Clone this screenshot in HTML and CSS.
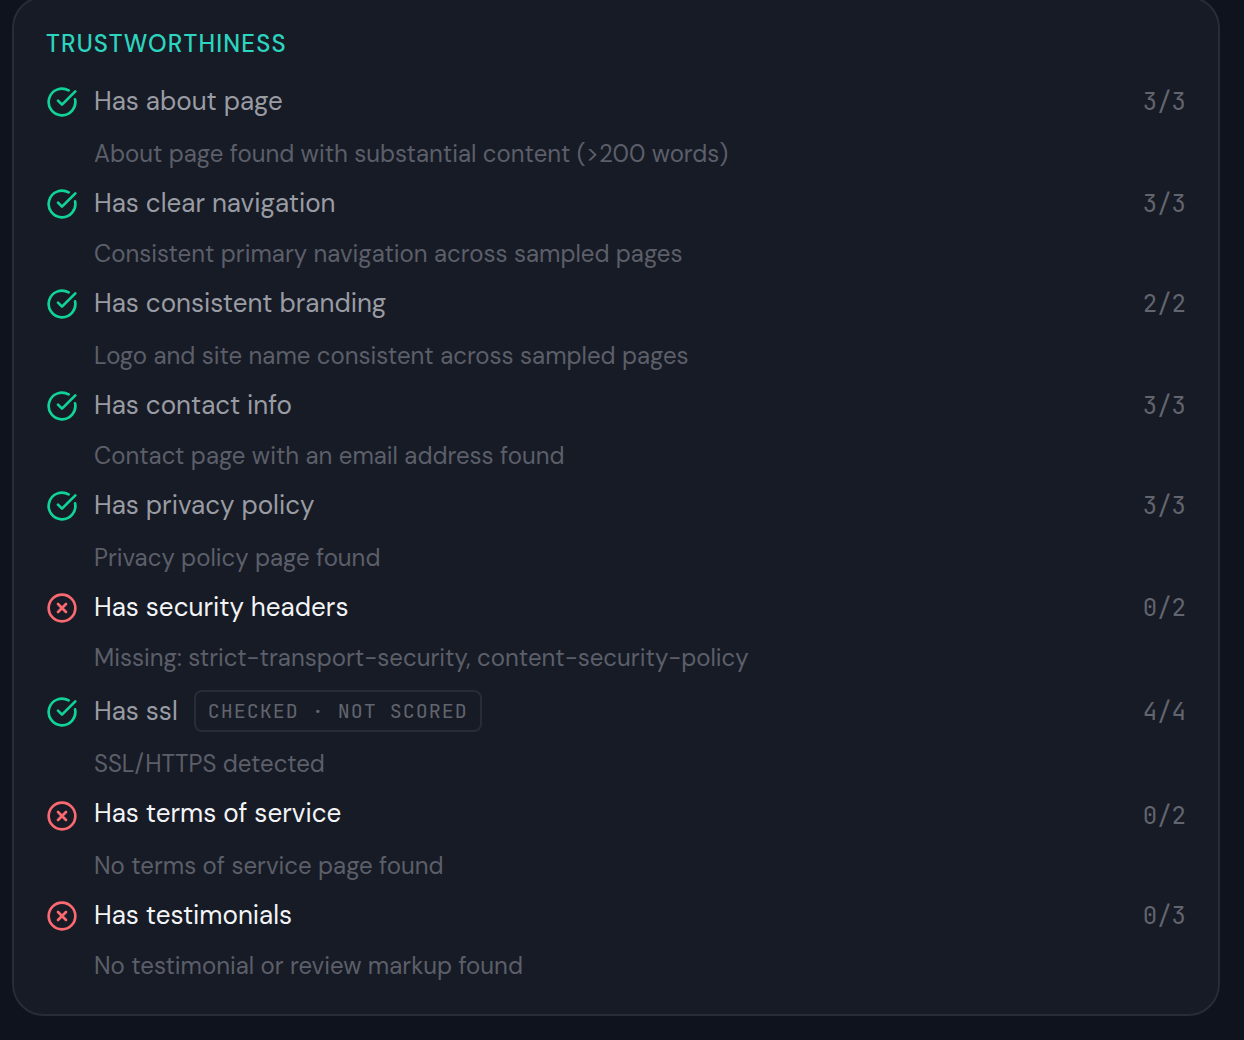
FILE: index.html
```html
<!DOCTYPE html>
<html lang="en">
<head>
  <meta charset="UTF-8" />
  <meta name="viewport" content="width=device-width, initial-scale=1.0" />
  <title>Trustworthiness</title>
  <link rel="stylesheet" href="styles.css">
</head>
<body>
  <svg class="sprite" aria-hidden="true">
    <symbol id="pass" viewBox="0 0 24 24">
      <path d="M21.801 10A10 10 0 1 1 17 3.335" />
      <path d="m9 11 3 3L22 4" />
    </symbol>
    <symbol id="fail" viewBox="0 0 24 24">
      <circle cx="12" cy="12" r="10" />
      <path d="m15 9-6 6M9 9l6 6" />
    </symbol>
  </svg>

  <section class="card">
    <h2 class="card-title">TRUSTWORTHINESS</h2>
    <ul class="checks">
      <li class="check">
        <div class="check-head">
          <svg class="icon"><use href="#pass" /></svg>
          <span class="name">Has about page</span>
          <span class="score">3/3</span>
        </div>
        <p class="detail">About page found with substantial content (&gt;200 words)</p>
      </li>
      <li class="check snug">
        <div class="check-head">
          <svg class="icon"><use href="#pass" /></svg>
          <span class="name">Has clear navigation</span>
          <span class="score">3/3</span>
        </div>
        <p class="detail">Consistent primary navigation across sampled pages</p>
      </li>
      <li class="check">
        <div class="check-head">
          <svg class="icon"><use href="#pass" /></svg>
          <span class="name">Has consistent branding</span>
          <span class="score">2/2</span>
        </div>
        <p class="detail">Logo and site name consistent across sampled pages</p>
      </li>
      <li class="check snug">
        <div class="check-head">
          <svg class="icon"><use href="#pass" /></svg>
          <span class="name">Has contact info</span>
          <span class="score">3/3</span>
        </div>
        <p class="detail">Contact page with an email address found</p>
      </li>
      <li class="check">
        <div class="check-head">
          <svg class="icon"><use href="#pass" /></svg>
          <span class="name">Has privacy policy</span>
          <span class="score">3/3</span>
        </div>
        <p class="detail">Privacy policy page found</p>
      </li>
      <li class="check snug failed before-badge">
        <div class="check-head">
          <svg class="icon"><use href="#fail" /></svg>
          <span class="name">Has security headers</span>
          <span class="score">0/2</span>
        </div>
        <p class="detail">Missing: strict-transport-security, content-security-policy</p>
      </li>
      <li class="check with-badge">
        <div class="check-head">
          <svg class="icon"><use href="#pass" /></svg>
          <span class="name">Has ssl</span>
          <span class="badge">CHECKED · NOT SCORED</span>
          <span class="score">4/4</span>
        </div>
        <p class="detail">SSL/HTTPS detected</p>
      </li>
      <li class="check snug failed raised">
        <div class="check-head">
          <svg class="icon"><use href="#fail" /></svg>
          <span class="name">Has terms of service</span>
          <span class="score">0/2</span>
        </div>
        <p class="detail">No terms of service page found</p>
      </li>
      <li class="check snug failed">
        <div class="check-head">
          <svg class="icon"><use href="#fail" /></svg>
          <span class="name">Has testimonials</span>
          <span class="score">0/3</span>
        </div>
        <p class="detail">No testimonial or review markup found</p>
      </li>
    </ul>
  </section>
</body>
</html>
```
FILE: styles.css
```css
* {
  box-sizing: border-box;
}

body {
  margin: 0;
  height: 1040px;
  overflow: hidden;
  background: #0f131e;
  font-family: "DM Sans", Inter, sans-serif;
  color: #f3f4f6;
}

.sprite {
  display: none;
}

.card {
  width: 1208px;
  height: 1020px;
  margin: -4px 0 0 12px;
  padding: 28px 32px 0;
  background: #171b26;
  border: 2px solid #292c36;
  border-radius: 32px;
}

.card-title {
  margin: 0 0 21px;
  font-size: 24px;
  line-height: 36px;
  font-weight: 500;
  letter-spacing: 1.2px;
  color: #2dd4bf;
}

.checks {
  margin: 0;
  padding: 0;
  list-style: none;
}

.check {
  height: 102px;
}

.check.snug {
  height: 100px;
}

.check.before-badge {
  height: 101px;
}

.check.with-badge {
  height: 107px;
}

.check-head {
  display: flex;
  align-items: center;
  height: 36px;
}

.with-badge .check-head {
  height: 42px;
}

.icon {
  width: 32px;
  height: 32px;
  margin: 2px 16px 0 0;
  fill: none;
  stroke: #10d497;
  stroke-width: 2;
  stroke-linecap: round;
  stroke-linejoin: round;
}

.failed .icon {
  stroke: #fb6a70;
}

.name {
  font-size: 26px;
  line-height: 36px;
  color: #9a9ca4;
}

.failed .name {
  color: #f3f4f6;
}

.raised .name {
  margin-top: -4px;
}

.score {
  margin-left: auto;
  font-family: "JetBrains Mono", "Liberation Mono", monospace;
  font-size: 24px;
  color: #62656e;
}

.badge {
  height: 42px;
  margin-left: 16px;
  padding: 0 12px;
  border: 2px solid #292c36;
  border-radius: 8px;
  font-family: "JetBrains Mono", "Liberation Mono", monospace;
  font-size: 20px;
  line-height: 38px;
  letter-spacing: 1px;
  color: #62656e;
}

.detail {
  margin: 18px 0 0 48px;
  font-size: 24px;
  line-height: 34px;
  color: #5c5f69;
}

.snug .detail {
  margin-top: 16px;
}

.with-badge .detail {
  margin-top: 15px;
}
```
